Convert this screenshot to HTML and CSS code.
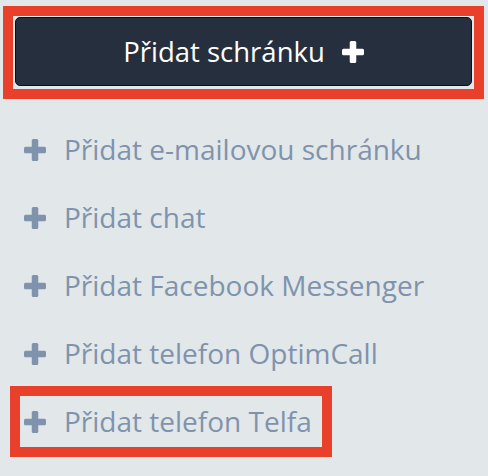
FILE: index.html
```html
<!DOCTYPE html>
<html lang="cs">
<head>
<meta charset="utf-8">
<title>Přidat schránku</title>
<link rel="stylesheet" href="styles.css">
</head>
<body>
<div class="mark mark-top">
  <button class="add-btn" type="button">
    <span class="add-btn-label">Přidat schránku</span>
    <svg class="plus plus-btn" viewBox="0 0 22 22" aria-hidden="true"><rect x="7.75" y="0" width="6.5" height="22" rx="1.5"/><rect x="0" y="7.75" width="22" height="6.5" rx="1.5"/></svg>
  </button>
</div>
<ul class="menu">
  <li class="item"><svg class="plus" viewBox="0 0 22 22" aria-hidden="true"><rect x="7.75" y="0" width="6.5" height="22" rx="1.5"/><rect x="0" y="7.75" width="22" height="6.5" rx="1.5"/></svg><span>Přidat e-mailovou schránku</span></li>
  <li class="item"><svg class="plus" viewBox="0 0 22 22" aria-hidden="true"><rect x="7.75" y="0" width="6.5" height="22" rx="1.5"/><rect x="0" y="7.75" width="22" height="6.5" rx="1.5"/></svg><span>Přidat chat</span></li>
  <li class="item"><svg class="plus" viewBox="0 0 22 22" aria-hidden="true"><rect x="7.75" y="0" width="6.5" height="22" rx="1.5"/><rect x="0" y="7.75" width="22" height="6.5" rx="1.5"/></svg><span>Přidat Facebook Messenger</span></li>
  <li class="item"><svg class="plus" viewBox="0 0 22 22" aria-hidden="true"><rect x="7.75" y="0" width="6.5" height="22" rx="1.5"/><rect x="0" y="7.75" width="22" height="6.5" rx="1.5"/></svg><span>Přidat telefon OptimCall</span></li>
  <li class="item item-marked"><svg class="plus" viewBox="0 0 22 22" aria-hidden="true"><rect x="7.75" y="0" width="6.5" height="22" rx="1.5"/><rect x="0" y="7.75" width="22" height="6.5" rx="1.5"/></svg><span>Přidat telefon Telfa</span></li>
</ul>
</body>
</html>
```
FILE: styles.css
```css
* { box-sizing: border-box; }
html, body {
  margin: 0;
  padding: 0;
  background: #e2e7ea;
  font-family: "Open Sans", "Noto Sans", sans-serif;
}
body {
  width: 488px;
  height: 476px;
  overflow: hidden;
  padding: 6px 0 0 3px;
}
.mark-top {
  width: 481px;
  height: 93px;
  border: 10px solid #e8402a;
  padding: 1px 2px 3px 2px;
}
.add-btn {
  width: 100%;
  height: 69px;
  margin: 0;
  padding: 0;
  background: #262f3d;
  border: 1px solid #0c1016;
  border-radius: 5px;
  color: #ffffff;
  font-family: inherit;
  font-size: 27.5px;
  display: flex;
  align-items: center;
  justify-content: center;
  gap: 17px;
  cursor: pointer;
}
.add-btn-label {
  line-height: 38px;
}
.plus {
  width: 22px;
  height: 22px;
  flex: none;
  fill: #7f93ad;
}
.plus-btn {
  fill: #ffffff;
}
.menu {
  list-style: none;
  margin: 25px 0 0 17px;
  padding: 0;
  display: flex;
  flex-direction: column;
  align-items: flex-start;
  gap: 17px;
}
.item {
  height: 51px;
  display: flex;
  align-items: center;
  gap: 18px;
  padding: 0 10px 0 4px;
  color: #7f93ad;
  font-size: 28px;
  line-height: 51px;
  white-space: nowrap;
}
.item-marked {
  box-shadow: 0 0 0 10px #e8402a;
}
```
